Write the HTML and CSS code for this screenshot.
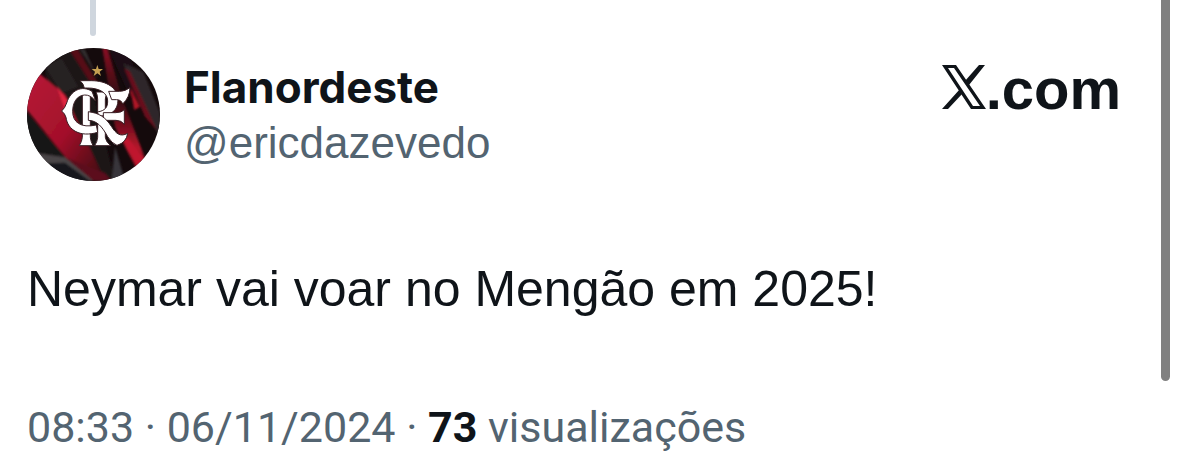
FILE: index.html
```html
<!DOCTYPE html>
<html lang="pt-BR">
<head>
<meta charset="utf-8">
<meta name="viewport" content="width=device-width, initial-scale=1">
<title>Flanordeste</title>
<link rel="stylesheet" href="styles.css">
</head>
<body>
<main class="page">
  <article class="post">
    <div class="thread-line"></div>
    <header class="head">
      <svg class="avatar" viewBox="36 144 399 399" role="img" aria-label="Flanordeste">
        <defs>
          <clipPath id="round"><circle cx="235.500" cy="343.500" r="199.500"/></clipPath>
          <filter id="soft"><feGaussianBlur stdDeviation="3"/></filter>
          <linearGradient id="red" x1="0" y1="0" x2="1" y2="1">
            <stop offset="0" stop-color="#b81a38"/><stop offset=".55" stop-color="#a3102a"/><stop offset="1" stop-color="#3a0810"/>
          </linearGradient>
          <linearGradient id="glow" x1="0" y1="0" x2="0" y2="1">
            <stop offset="0" stop-color="#8a1124"/><stop offset=".4" stop-color="#2c080e"/><stop offset=".8" stop-color="#b5162c"/><stop offset="1" stop-color="#4a0914"/>
          </linearGradient>
        </defs>
        <g clip-path="url(#round)">
          <rect x="36" y="144" width="399" height="399" fill="#140a0c"/>
          <g filter="url(#soft)">
            <path d="M110 150L200 144L300 543H230L90 220Z" fill="#1c1315"/>
            <path d="M20 250L75 222L150 285L260 520L200 543L150 470L20 310Z" fill="url(#red)"/>
            <path d="M90 200L140 175L190 260L140 280Z" fill="#262123"/>
            <path d="M125 258L165 310L150 330Z" fill="#e02840"/>
            <path d="M160 144L185 144L250 250L228 250Z" fill="#560c19"/>
            <path d="M195 144L210 150L250 240Z" fill="#363032"/>
            <path d="M262 144L277 144L320 290L400 500L370 520L300 380Z" fill="url(#glow)"/>
            <path d="M280 144L345 170L380 260L345 290Z" fill="#1a1012"/>
            <path d="M325 190L385 215L435 340V410L385 330Z" fill="#2f2629"/>
            <path d="M328 205L345 215L425 390L390 350Z" fill="#6b0f1e"/>
            <path d="M345 262L375 320L358 330Z" fill="#b01428"/>
            <path d="M318 405L340 415L390 480L370 510Z" fill="#c0162e"/>
            <path d="M20 320L150 470L75 460L40 440Z" fill="#151516"/>
            <path d="M60 458L150 472L240 543H130Z" fill="#484446"/>
            <path d="M90 490L150 488L225 543H130Z" fill="#14171a"/>
            <path d="M150 472L270 520L290 543H235Z" fill="#5c0e1c"/>
            <path d="M300 440L330 543H290Z" fill="#38363b"/>
          </g>
          <path d="M247 195l4 12h13l-10 8 4 13-11-8-11 8 4-13-10-8h13z" fill="#c6a052"/>
          <g fill="#fff" stroke="#3a2026" stroke-width="3" stroke-linejoin="round">
            <path d="M202 278H226V412Q227 424 234 437H193Q201 424 202 412Z"/>
            <path d="M243 276H281Q271 285 271 297V412Q272 425 287 437H239Q247 425 248 412V298Q248 285 243 276Z"/>
            <path d="M195 242H229C275 242 309 264 309 300C309 332 286 348 252 348L247 336C271 332 278 322 278 303C278 278 252 264 218 264H208Q206 251 195 242Z"/>
            <path d="M281 274H314Q330 274 345 263Q345 291 323 312Q319 299 305 299H290Z"/>
            <path d="M265 338H302Q320 338 328 329V373Q319 361 303 361H265Z"/>
            <path d="M220 335C252 339 271 351 289 379C303 401 315 412 338 400Q334 428 306 436Q290 430 278 410C261 379 246 362 220 361Z"/>
            <path d="M231 274L242 303Q226 284 209 285C185 286 173 309 173 334C173 367 197 385 244 375L248 397C195 413 158 390 153 352Q150 341 140 333Q150 324 155 309C166 272 200 254 231 274Z"/>
          </g>
        </g>
      </svg>
      <div class="author">
        <strong class="name">Flanordeste</strong>
        <span class="handle">@ericdazevedo</span>
      </div>
      <div class="brand">
        <svg class="brand-x" viewBox="0 0 44 44" aria-label="X" role="img">
          <path d="M0 0H14L44 44H29ZM6 3L31 41H38L12 3Z" fill="#0f1419" fill-rule="evenodd"/>
          <path d="M37 0H43L27 20L23 16ZM18 24L21 28L6 44H0Z" fill="#0f1419"/>
        </svg><span>.com</span>
      </div>
    </header>
    <p class="text">Neymar vai voar no Mengão em 2025!</p>
    <p class="meta">08:33 · 06/11/2024 · <strong class="count">73</strong> visualizações</p>
  </article>
  <div class="scroll-thumb"></div>
</main>
</body>
</html>
```
FILE: styles.css
```css
* { box-sizing: border-box; }
body {
  margin: 0;
  background: #fff;
  color: #0f1419;
  font-family: "Liberation Sans", sans-serif;
}
.page {
  display: flex;
  align-items: flex-start;
  padding-right: 9px;
}
.post {
  flex: 1;
  min-width: 0;
  padding: 0 40px 0 27px;
}
.thread-line {
  width: 6px;
  height: 36px;
  margin-left: 63px;
  border-radius: 0 0 3px 3px;
  background: #cfd6de;
}
.head {
  display: flex;
  align-items: flex-start;
  margin-top: 12px;
}
.avatar {
  flex: none;
  width: 133px;
  height: 133px;
}
.author {
  display: flex;
  flex-direction: column;
  padding: 12px 0 0 24px;
  font-size: 44px;
  line-height: 55px;
}
.name { font-family: Inter, sans-serif; font-weight: 700; }
.handle { color: #536471; }
.brand {
  display: flex;
  align-items: flex-end;
  margin-left: auto;
  padding-top: 8px;
  font-size: 58px;
  font-weight: 700;
  line-height: 66px;
}
.brand-x {
  width: 44px;
  height: 44px;
  margin-bottom: 13px;
}
.text {
  margin: 74px 0 0;
  font-size: 50px;
  line-height: 68px;
}
.meta {
  margin: 76px 0 0;
  color: #536471;
  font-family: Roboto, sans-serif;
  font-size: 43px;
  line-height: 56px;
}
.count { color: #0f1419; }
.scroll-thumb {
  flex: none;
  width: 9px;
  height: 381px;
  border-radius: 0 0 5px 5px;
  background: #808080;
}
```
